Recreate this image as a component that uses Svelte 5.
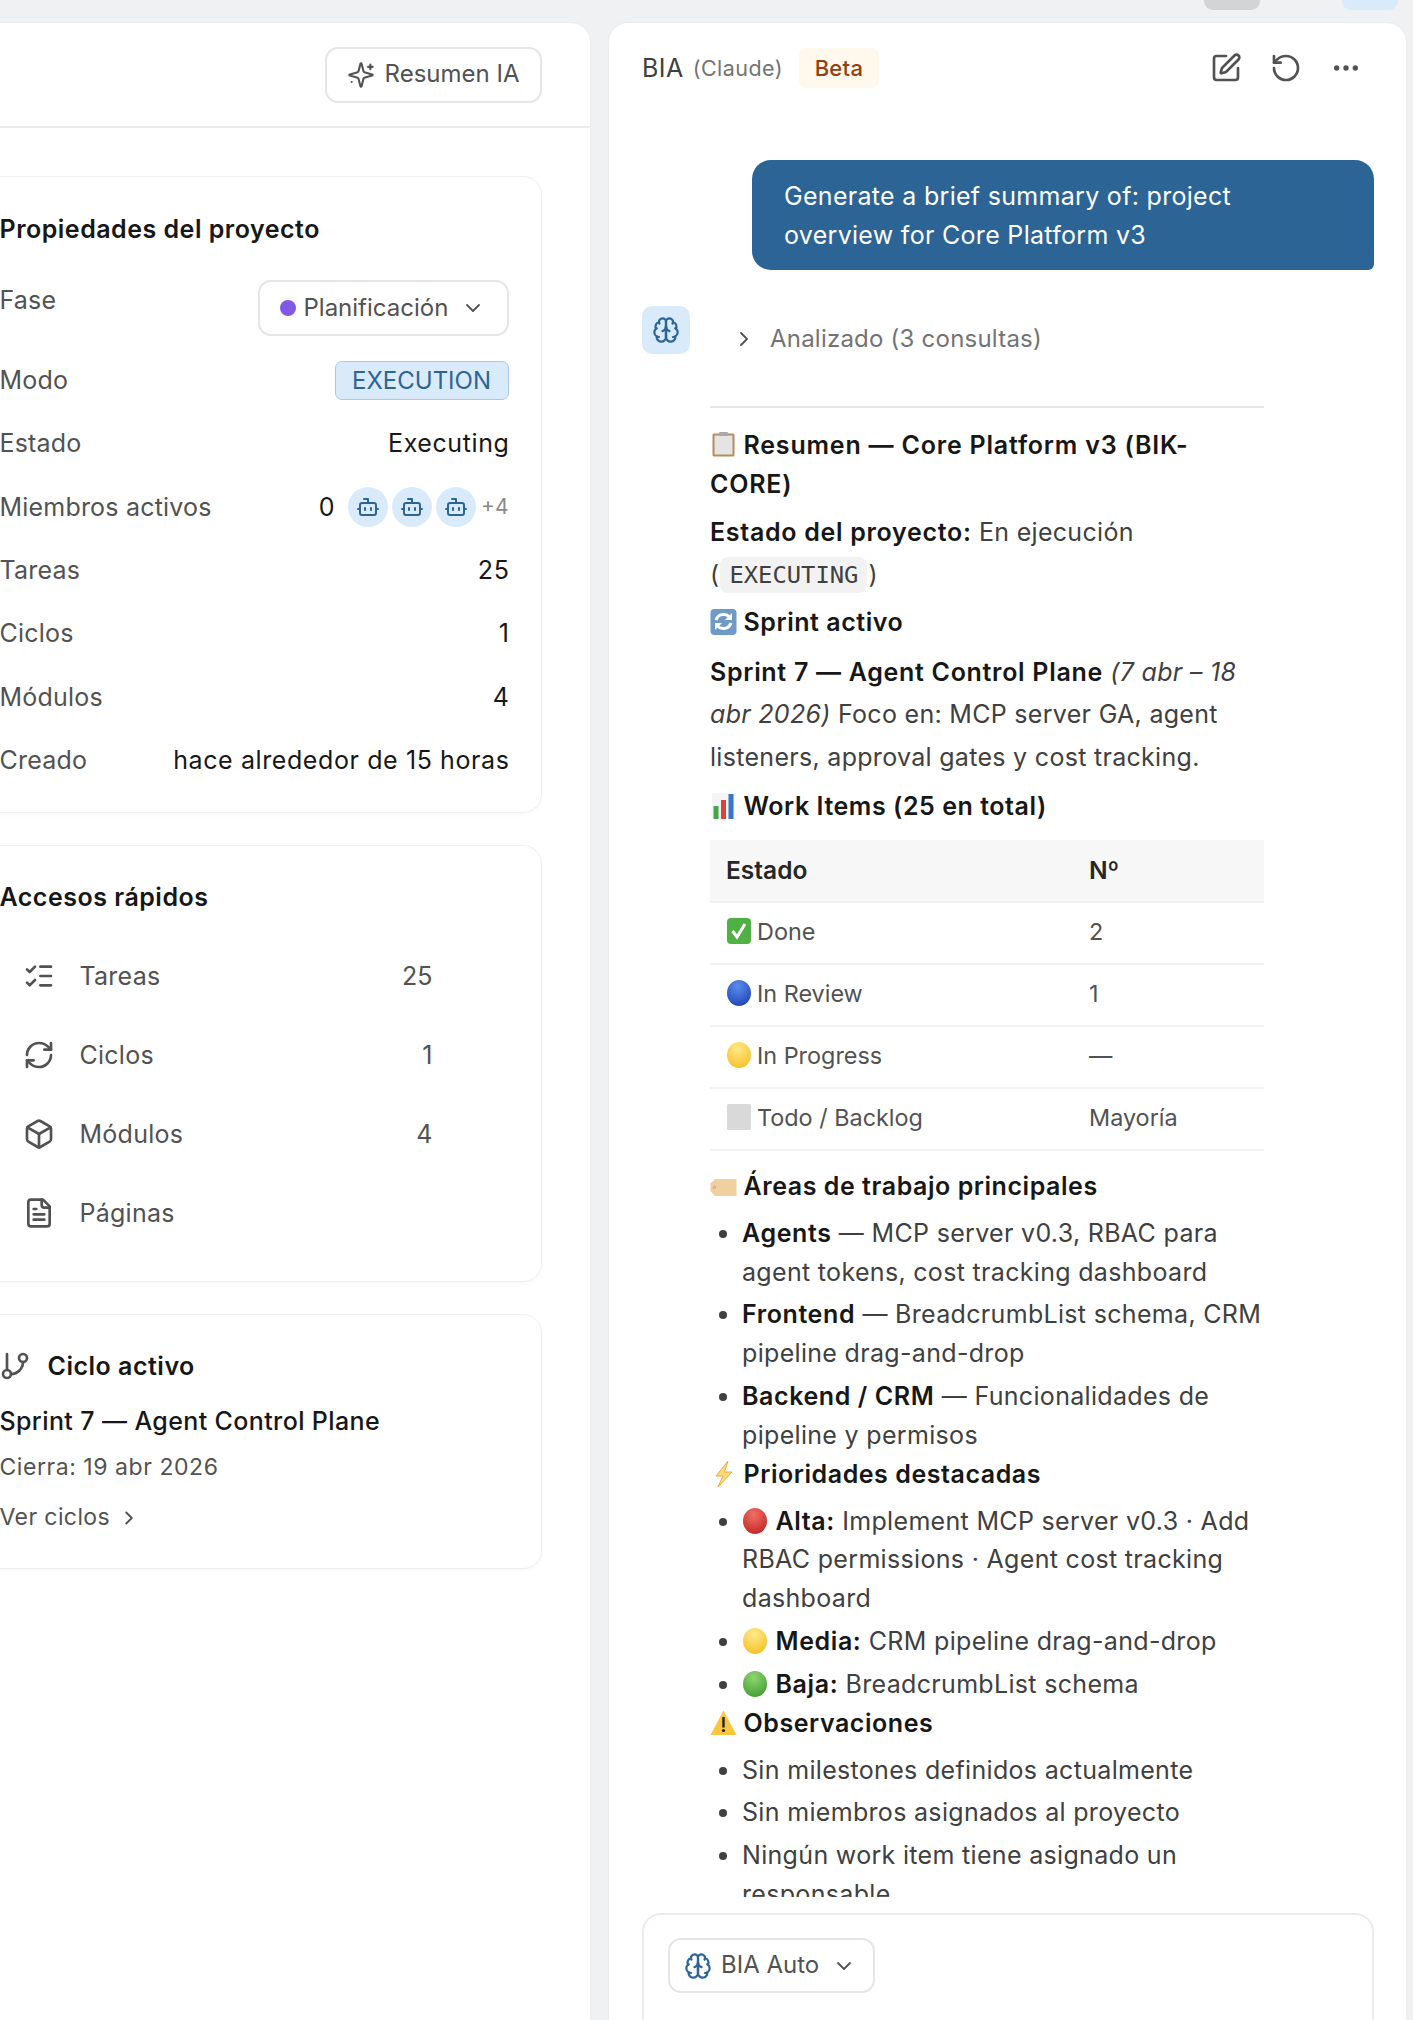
<script>
  const props = [
    { k: 'Estado', v: 'Executing' }
  ];
  const counts = [
    { k: 'Tareas', v: '25' },
    { k: 'Ciclos', v: '1' },
    { k: 'Módulos', v: '4' },
    { k: 'Creado', v: 'hace alrededor de 15 horas' }
  ];
  const tableRows = [
    { e: 'check', s: 'Done', n: '2' },
    { e: 'blue', s: 'In Review', n: '1' },
    { e: 'yellow', s: 'In Progress', n: '—' },
    { e: 'gray', s: 'Todo / Backlog', n: 'Mayoría' }
  ];
  const circles = {
    blue: ['#5b8def', '#1c3fb0'],
    yellow: ['#ffe98a', '#f5bd1f'],
    red: ['#f0706a', '#c0201c'],
    green: ['#8fd672', '#3c9a2e']
  };
</script>

{#snippet emoji(kind)}
  <svg class="e" viewBox="0 0 27 27" aria-hidden="true">
    {#if kind === 'clip'}
      <rect x="2.5" y="2.5" width="22" height="23" rx="1.5" fill="#b98a5a" />
      <rect x="4.5" y="4.5" width="18" height="19" fill="#e4e4e4" />
      <rect x="9" y="1" width="9" height="4" rx="1" fill="#a9a9a9" />
    {:else if kind === 'sync'}
      <rect x="0.5" y="1" width="26" height="26" rx="4" fill="#6d9ac9" />
      <path d="M6 12a8 8 0 0 1 13.5-3M21 15a8 8 0 0 1-13.5 3" fill="none" stroke="#fff" stroke-width="3" />
      <path d="M22 5v7h-7zM5 22v-7h7z" fill="#fff" />
    {:else if kind === 'chart'}
      <rect x="2" y="1" width="23" height="26" fill="#f4f4f4" />
      <rect x="3.5" y="14" width="5" height="13" fill="#45a647" />
      <rect x="11" y="8" width="5" height="19" fill="#d8453c" />
      <rect x="18.5" y="2" width="5" height="25" fill="#3b74c9" />
    {:else if kind === 'check'}
      <rect x="1" y="1" width="24" height="26" rx="4" fill="#4fb043" />
      <path d="M6.5 14l4.5 6 8-13" fill="none" stroke="#fff" stroke-width="3" />
    {:else if kind === 'gray'}
      <rect x="1" y="1" width="24" height="26" rx="1.5" fill="#d9d9d9" />
    {:else if kind === 'tag'}
      <path d="M5 7h21.5v17H5L.5 19v-7.5z" fill="#f0cfa0" />
      <circle cx="4.5" cy="15.5" r="1.2" fill="none" stroke="#a88" stroke-width=".6" />
    {:else if kind === 'bolt'}
      <path d="M18 1L6 16h7l-5 11 14-15h-7.5z" fill="#fbdc7a" stroke="#eda93a" stroke-width="1" />
    {:else if kind === 'warn'}
      <path d="M13.5 1.5L26.5 26H.5z" fill="#f8c73f" />
      <rect x="12.3" y="8" width="2.4" height="10.5" fill="#222" />
      <circle cx="13.5" cy="21.5" r="1.6" fill="#222" />
    {:else}
      <defs>
        <radialGradient id={'g' + kind} cx=".45" cy=".25" r=".85">
          <stop offset="0" stop-color={circles[kind][0]} />
          <stop offset="1" stop-color={circles[kind][1]} />
        </radialGradient>
      </defs>
      <ellipse cx="13" cy="14" rx="12" ry="13" fill={'url(#g' + kind + ')'} />
    {/if}
  </svg>
{/snippet}

{#snippet brain(cls)}
  <svg class={cls} viewBox="0 0 24 24">
    <path d="M12 5a3 3 0 1 0-5.997.125 4 4 0 0 0-2.526 5.77 4 4 0 0 0 .556 6.588A4 4 0 1 0 12 18Z" />
    <path d="M12 5a3 3 0 1 1 5.997.125 4 4 0 0 1 2.526 5.77 4 4 0 0 1-.556 6.588A4 4 0 1 1 12 18Z" />
    <path d="M15 13a4.5 4.5 0 0 1-3-4 4.5 4.5 0 0 1-3 4" />
    <path d="M12 18V9" />
    <path d="M17.599 6.5a3 3 0 0 0 .399-1.375" />
    <path d="M6.003 5.125A3 3 0 0 0 6.401 6.5" />
    <path d="M3.477 10.896a4 4 0 0 1 .585-.396" />
    <path d="M19.938 10.5a4 4 0 0 1 .585.396" />
    <path d="M6 18a4 4 0 0 1-1.967-.516" />
    <path d="M19.967 17.484A4 4 0 0 1 18 18" />
  </svg>
{/snippet}

{#snippet bot()}
  <span class="avatar">
    <svg class="ic bot" viewBox="0 0 24 24">
      <path d="M12 8V4H8" /><rect x="4" y="8" width="16" height="12" rx="2" />
      <path d="M2 14h2M20 14h2M15 13v2M9 13v2" />
    </svg>
  </span>
{/snippet}

<div class="page">
  <div class="tabs">
    <span class="tab gray"></span>
    <span class="tab blue"></span>
  </div>

  <aside class="left">
    <header class="lhead">
      <button class="btn">
        <svg class="ic spark" viewBox="0 0 24 24">
          <path d="M9.937 15.5A2 2 0 0 0 8.5 14.063l-6.135-1.582a.5.5 0 0 1 0-.962L8.5 9.936A2 2 0 0 0 9.937 8.5l1.582-6.135a.5.5 0 0 1 .963 0L14.063 8.5A2 2 0 0 0 15.5 9.937l6.135 1.581a.5.5 0 0 1 0 .964L15.5 14.063a2 2 0 0 0-1.437 1.437l-1.582 6.135a.5.5 0 0 1-.963 0z" />
          <path d="M20 3v4M22 5h-4M4 18h.01" />
        </svg>
        Resumen IA
      </button>
    </header>

    <div class="lbody">
      <section class="card props">
        <h3>Propiedades del proyecto</h3>
        <div class="row top">
          <span class="k">Fase</span>
          <span class="select">
            <i class="dot"></i>Planificación
            <svg class="ic chev" viewBox="0 0 24 24"><path d="m6 9 6 6 6-6" /></svg>
          </span>
        </div>
        <div class="row">
          <span class="k">Modo</span>
          <span class="mode">EXECUTION</span>
        </div>
        {#each props as p}
          <div class="row"><span class="k">{p.k}</span><span class="v">{p.v}</span></div>
        {/each}
        <div class="row">
          <span class="k">Miembros activos</span>
          <span class="members">
            <span class="v zero">0</span>
            {@render bot()}{@render bot()}{@render bot()}
            <span class="more">+4</span>
          </span>
        </div>
        {#each counts as p}
          <div class="row"><span class="k">{p.k}</span><span class="v">{p.v}</span></div>
        {/each}
      </section>

      <section class="card quick">
        <h3>Accesos rápidos</h3>
        <ul class="links">
          <li>
            <svg class="ic" viewBox="0 0 24 24"><path d="m3 17 2 2 4-4M3 7l2 2 4-4M13 5h8M13 12h8M13 19h8" /></svg>
            <span class="lname">Tareas</span><span class="lnum">25</span>
          </li>
          <li>
            <svg class="ic" viewBox="0 0 24 24"><path d="M3 12a9 9 0 0 1 9-9 9.75 9.75 0 0 1 6.74 2.74L21 8" /><path d="M21 3v5h-5" /><path d="M21 12a9 9 0 0 1-9 9 9.75 9.75 0 0 1-6.74-2.74L3 16" /><path d="M8 16H3v5" /></svg>
            <span class="lname">Ciclos</span><span class="lnum">1</span>
          </li>
          <li>
            <svg class="ic" viewBox="0 0 24 24"><path d="M21 8a2 2 0 0 0-1-1.73l-7-4a2 2 0 0 0-2 0l-7 4A2 2 0 0 0 3 8v8a2 2 0 0 0 1 1.73l7 4a2 2 0 0 0 2 0l7-4A2 2 0 0 0 21 16Z" /><path d="m3.3 7 8.7 5 8.7-5" /><path d="M12 22V12" /></svg>
            <span class="lname">Módulos</span><span class="lnum">4</span>
          </li>
          <li>
            <svg class="ic" viewBox="0 0 24 24"><path d="M15 2H6a2 2 0 0 0-2 2v16a2 2 0 0 0 2 2h12a2 2 0 0 0 2-2V7Z" /><path d="M14 2v4a2 2 0 0 0 2 2h4" /><path d="M10 9H8M16 13H8M16 17H8" /></svg>
            <span class="lname">Páginas</span>
          </li>
        </ul>
      </section>

      <section class="card cycle">
        <h3 class="chead">
          <svg class="ic" viewBox="0 0 24 24"><path d="M6 3v12" /><circle cx="18" cy="6" r="3" /><circle cx="6" cy="18" r="3" /><path d="M18 9a9 9 0 0 1-9 9" /></svg>
          Ciclo activo
        </h3>
        <div class="cname">Sprint 7 — Agent Control Plane</div>
        <div class="cdate">Cierra: 19 abr 2026</div>
        <div class="clink">Ver ciclos
          <svg class="ic tiny" viewBox="0 0 24 24"><path d="m9 18 6-6-6-6" /></svg>
        </div>
      </section>
    </div>
  </aside>

  <main class="right">
    <header class="rhead">
      <span class="bia">BIA</span>
      <span class="model">(Claude)</span>
      <span class="beta">Beta</span>
      <span class="tools">
        <svg class="ic" viewBox="0 0 24 24"><path d="M12 3H5a2 2 0 0 0-2 2v14a2 2 0 0 0 2 2h14a2 2 0 0 0 2-2v-7" /><path d="M18.375 2.625a1 1 0 0 1 3 3l-9.013 9.014a2 2 0 0 1-.853.505l-2.873.84a.5.5 0 0 1-.62-.62l.84-2.873a2 2 0 0 1 .506-.852z" /></svg>
        <svg class="ic" viewBox="0 0 24 24"><path d="M3 12a9 9 0 1 0 9-9 9.75 9.75 0 0 0-6.74 2.74L3 8" /><path d="M3 3v5h5" /></svg>
        <svg class="ic" viewBox="0 0 24 24"><circle cx="12" cy="12" r="1" /><circle cx="19" cy="12" r="1" /><circle cx="5" cy="12" r="1" /></svg>
      </span>
    </header>

    <div class="chat">
      <div class="bubble">Generate a brief summary of: project overview for Core Platform v3</div>

      <div class="msg">
        <span class="bavatar">{@render brain('ic brain')}</span>
        <div class="mbody">
          <div class="analyzed">
            <svg class="ic small" viewBox="0 0 24 24"><path d="m9 18 6-6-6-6" /></svg>
            Analizado (3 consultas)
          </div>
          <hr />
          <h4 class="first">{@render emoji('clip')}Resumen — Core Platform v3 (BIK-CORE)</h4>
          <p class="state"><strong>Estado del proyecto:</strong> En ejecución <span class="nb">(<code>EXECUTING</code>)</span></p>
          <h4>{@render emoji('sync')}Sprint activo</h4>
          <p><strong>Sprint 7 — Agent Control Plane</strong> <em>(7 abr – 18 abr 2026)</em> Foco en: MCP server GA, agent listeners, approval gates y cost tracking.</p>
          <h4 class="work">{@render emoji('chart')}Work Items (25 en total)</h4>
          <table>
            <thead><tr><th>Estado</th><th>Nº</th></tr></thead>
            <tbody>
              {#each tableRows as r}
                <tr><td>{@render emoji(r.e)}{r.s}</td><td>{r.n}</td></tr>
              {/each}
            </tbody>
          </table>
          <h4 class="after-table">{@render emoji('tag')}Áreas de trabajo principales</h4>
          <ul>
            <li><strong>Agents</strong> — MCP server v0.3, RBAC para agent tokens, cost tracking dashboard</li>
            <li><strong>Frontend</strong> — BreadcrumbList schema, CRM pipeline drag-and-drop</li>
            <li><strong>Backend / CRM</strong> — Funcionalidades de pipeline y permisos</li>
          </ul>
          <h4 class="tight">{@render emoji('bolt')}Prioridades destacadas</h4>
          <ul>
            <li>{@render emoji('red')}<strong>Alta:</strong> Implement MCP server v0.3 · Add RBAC permissions · Agent cost tracking dashboard</li>
            <li>{@render emoji('yellow')}<strong>Media:</strong> CRM pipeline drag-and-drop</li>
            <li>{@render emoji('green')}<strong>Baja:</strong> BreadcrumbList schema</li>
          </ul>
          <h4 class="tight">{@render emoji('warn')}Observaciones</h4>
          <ul>
            <li>Sin milestones definidos actualmente</li>
            <li>Sin miembros asignados al proyecto</li>
            <li>Ningún work item tiene asignado un responsable</li>
          </ul>
        </div>
      </div>
    </div>

    <div class="composer">
      <span class="auto">
        {@render brain('ic brain')}
        BIA Auto
        <svg class="ic chev" viewBox="0 0 24 24"><path d="m6 9 6 6 6-6" /></svg>
      </span>
    </div>
  </main>
</div>

<style>
  :global(body) {
    margin: 0;
    background: #f0f1f3;
  }
  .page {
    position: relative;
    display: flex;
    gap: 19px;
    height: 2020px;
    padding-top: 23px;
    box-sizing: border-box;
    overflow: hidden;
    background: #f0f1f3;
    font-family: Inter, "Liberation Sans", sans-serif;
    font-size: 25px;
    letter-spacing: 0.32px;
    line-height: 38.8px;
    color: #404040;
  }
  .tabs {
    position: absolute;
    top: 0;
    left: 1204px;
    display: flex;
    gap: 82px;
  }
  .tab {
    width: 56px;
    height: 10px;
    border-radius: 0 0 9px 9px;
  }
  .tab.gray { background: #d4d4d4; }
  .tab.blue { background: #d9ebfb; }

  .ic {
    width: 32px;
    height: 32px;
    flex: none;
    fill: none;
    stroke: #525252;
    stroke-width: 2;
    stroke-linecap: round;
    stroke-linejoin: round;
  }

  .left {
    flex: none;
    width: 650px;
    margin-left: -60px;
    background: #fff;
    border-radius: 0 19px 0 0;
    box-shadow: 0 0 3px rgba(0, 0, 0, 0.05);
  }
  .lhead {
    display: flex;
    justify-content: flex-end;
    align-items: center;
    height: 105px;
    padding-right: 48.5px;
    border-bottom: 2px solid #ececec;
    box-sizing: border-box;
  }
  .btn {
    display: flex;
    align-items: center;
    gap: 10px;
    height: 56px;
    width: 217px;
    justify-content: center;
    padding: 0;
    background: #fff;
    border: 2px solid #e5e5e5;
    border-radius: 13px;
    font: inherit;
    font-size: 24px;
    letter-spacing: 0;
    color: #525252;
  }
  .spark { width: 28px; height: 28px; stroke-width: 1.8; }
  .lbody {
    display: flex;
    flex-direction: column;
    gap: 32px;
    padding: 48px 48.5px 0 25.5px;
  }
  .card {
    padding: 32px 32px 32px 33px;
    background: #fff;
    border: 1.5px solid #efefef;
    border-radius: 19px;
    box-shadow: 0 2px 4px rgba(0, 0, 0, 0.03);
  }
  .props { padding-top: 33px; }
  h3 {
    margin: 0;
    font-size: 25px;
    font-weight: 600;
    letter-spacing: 0.5px;
    line-height: 39px;
    color: #171717;
  }
  .props h3 { margin-bottom: 31px; }
  .row {
    display: flex;
    justify-content: space-between;
    align-items: center;
    height: 38.4px;
    margin-bottom: 25px;
  }
  .row:last-child { margin-bottom: 0; }
  .row.top { align-items: flex-start; height: 56px; }
  .row.top .k { padding-top: 1px; }
  .k {
    letter-spacing: 0.2px;
    color: #525252;
  }
  .v {
    margin-right: -1px;
    letter-spacing: 0.6px;
    color: #171717;
  }
  .select {
    display: flex;
    align-items: center;
    box-sizing: border-box;
    width: 251px;
    height: 56px;
    padding: 0 22px 0 20px;
    border: 2px solid #e5e5e5;
    border-radius: 13px;
    font-size: 24px;
    letter-spacing: 0;
    color: #525252;
  }
  .dot {
    width: 16px;
    height: 16px;
    margin-right: 8px;
    border-radius: 50%;
    background: #8059e8;
  }
  .chev {
    width: 24px;
    height: 24px;
    margin-left: auto;
    stroke-width: 1.8;
  }
  .mode {
    box-sizing: border-box;
    height: 39px;
    padding: 0 16.5px;
    line-height: 37px;
    background: #d9ebfb;
    border: 1.5px solid #a9c9e6;
    border-radius: 7px;
    font-size: 24px;
    letter-spacing: 0;
    color: #2c6496;
  }
  .members {
    display: flex;
    align-items: center;
    gap: 4px;
  }
  .zero { margin-right: 9px; }
  .avatar {
    display: flex;
    align-items: center;
    justify-content: center;
    width: 40px;
    height: 40px;
    border-radius: 50%;
    background: #d9ebfb;
  }
  .bot {
    width: 24px;
    height: 24px;
    stroke: #2c6496;
  }
  .more {
    margin-left: 1px;
    font-size: 21px;
    letter-spacing: 0;
    color: #8a8a8a;
  }
  .links {
    margin: 20px 0 0;
    padding: 0;
    list-style: none;
  }
  .links li {
    display: flex;
    align-items: center;
    height: 79px;
    margin: 0;
    padding-left: 23px;
    letter-spacing: 0.25px;
    color: #525252;
  }
  .lname {
    margin-left: 25px;
    flex: 1;
  }
  .lnum {
    margin-right: 76px;
    letter-spacing: 0;
  }
  .quick { padding-bottom: 28px; }
  .chead {
    display: flex;
    align-items: center;
    gap: 17px;
  }
  .chead .ic { margin-left: -1px; }
  .cname {
    margin-top: 16px;
    font-weight: 500;
    letter-spacing: 0.38px;
    color: #171717;
  }
  .cdate {
    margin-top: 7px;
    font-size: 23px;
    letter-spacing: 0.55px;
    color: #525252;
  }
  .clink {
    display: flex;
    align-items: center;
    gap: 8px;
    margin-top: 12px;
    font-size: 23px;
    letter-spacing: 0.4px;
    color: #525252;
  }
  .tiny { width: 22px; height: 22px; }
  .cycle { padding-bottom: 31px; }

  .right {
    flex: none;
    display: flex;
    flex-direction: column;
    width: 797px;
    height: 2100px;
    background: #fff;
    border-radius: 19px 19px 0 0;
    box-shadow: 0 0 3px rgba(0, 0, 0, 0.05);
  }
  .rhead {
    display: flex;
    align-items: center;
    height: 90px;
    padding: 0 44px 0 33px;
    box-sizing: border-box;
    flex: none;
  }
  .bia {
    letter-spacing: 0.45px;
    color: #404040;
  }
  .model {
    margin-left: 9px;
    font-size: 21.5px;
    letter-spacing: 0.45px;
    color: #737373;
  }
  .beta {
    margin-left: 16px;
    padding: 0 15.5px;
    height: 40px;
    line-height: 40px;
    font-size: 22px;
    font-weight: 500;
    letter-spacing: 0.3px;
    background: #fef9ec;
    border-radius: 7px;
    color: #92400e;
  }
  .tools {
    display: flex;
    align-items: center;
    gap: 28px;
    margin-left: auto;
  }
  .chat {
    height: 1784px;
    flex: none;
    overflow: hidden;
    padding: 47px 32px 0 33px;
    box-sizing: border-box;
  }
  .bubble {
    box-sizing: border-box;
    width: 622px;
    margin-left: auto;
    padding: 17px 32px 15.4px;
    background: #2c6496;
    border-radius: 19px 19px 6px 19px;
    letter-spacing: 0.3px;
    color: #fff;
  }
  .msg {
    display: flex;
    gap: 20px;
    margin-top: 36px;
  }
  .bavatar {
    flex: none;
    display: flex;
    align-items: center;
    justify-content: center;
    width: 48px;
    height: 48px;
    border-radius: 10px;
    background: #d9ebfb;
  }
  .brain {
    width: 28px;
    height: 28px;
    stroke: #2c6496;
    stroke-width: 1.9;
  }
  .mbody {
    width: 554px;
    flex: none;
  }
  .analyzed {
    display: flex;
    align-items: center;
    gap: 14px;
    margin-top: 13.6px;
    padding-left: 22px;
    font-size: 24px;
    letter-spacing: 0.22px;
    color: #737373;
  }
  .small { width: 24px; height: 24px; margin-left: 0; stroke-width: 1.8; }
  hr {
    height: 2px;
    margin: 47.5px 0 18px;
    border: 0;
    background: #e5e5e5;
  }
  h4 {
    margin: 7px 0 0;
    font-size: 25px;
    font-weight: 600;
    letter-spacing: 0.55px;
    line-height: 39px;
    color: #171717;
  }
  h4.first { margin-top: 0; padding-right: 15px; letter-spacing: 0.8px; }
  h4.work { margin-top: 8.5px; }
  h4.after-table { margin-top: 16px; }
  h4.tight { margin-top: 0; }
  p {
    margin: 8.5px 0 0;
    line-height: 42.6px;
    letter-spacing: 0.3px;
  }
  p.state { margin-top: 7px; }
  p strong { letter-spacing: 0.7px; }
  .nb { white-space: nowrap; }
  strong {
    font-weight: 600;
    letter-spacing: 0.6px;
    color: #171717;
  }
  code {
    display: inline-block;
    margin: 0 1px;
    padding: 0 9px;
    font-family: "DejaVu Sans Mono", monospace;
    font-size: 23.8px;
    letter-spacing: 0;
    line-height: 36px;
    background: #f2f2f2;
    border-radius: 8px;
    color: #404040;
  }
  .e {
    display: inline-block;
    width: 27px;
    height: 27px;
    margin-right: 6.5px;
    vertical-align: -4px;
  }
  table {
    width: 100%;
    margin-top: 14px;
    border-collapse: collapse;
    table-layout: fixed;
  }
  th, td {
    padding: 0 16px;
    height: 62px;
    box-sizing: border-box;
    text-align: left;
    border-bottom: 2px solid #f2f2f2;
  }
  th {
    background: #f7f7f7;
    font-size: 24.5px;
    letter-spacing: 0;
    font-weight: 600;
    color: #262626;
  }
  td {
    font-size: 23.4px;
    letter-spacing: 0;
    color: #525252;
  }
  th:first-child { width: 363px; }
  td .e { margin-right: 4px; }
  ul {
    margin: 8px 0 0;
    padding-left: 32px;
  }
  li { margin-bottom: 4px; }
  .mbody ul li:last-child { margin-bottom: 0; }
  .composer {
    flex: none;
    box-sizing: border-box;
    height: 200px;
    margin: 16px 32px 0 33px;
    padding: 23px 24px;
    border: 2px solid #ececec;
    border-radius: 19px;
  }
  .auto {
    display: flex;
    align-items: center;
    gap: 9px;
    box-sizing: border-box;
    width: 207px;
    height: 55px;
    padding: 0 17px 0 14px;
    border: 2px solid #e5e5e5;
    border-radius: 13px;
    font-size: 24px;
    letter-spacing: 0;
    color: #525252;
  }
</style>
